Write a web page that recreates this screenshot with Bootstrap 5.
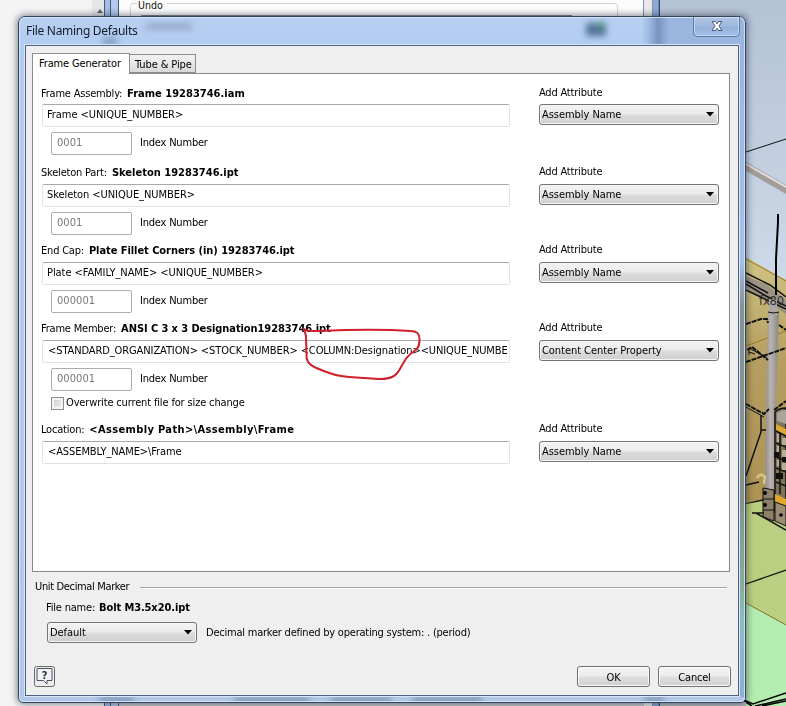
<!DOCTYPE html>
<html lang="en">
<head>
<meta charset="utf-8">
<meta name="viewport" content="width=device-width, initial-scale=1">
<title>File Naming Defaults</title>
<link href="https://cdn.jsdelivr.net/npm/bootstrap@5.3.0/dist/css/bootstrap.min.css" rel="stylesheet">
<style>
body{margin:0;background:#f4f4f4;overflow:hidden}
.desk{width:786px;height:706px;font:11px/14px "DejaVu Sans Condensed","DejaVu Sans",sans-serif;color:#000;letter-spacing:-.2px}
.desk b{letter-spacing:.02px;color:#000;margin-left:1px}
.scene{left:0;top:0}
.win{left:18px;top:16px;width:728px;height:687px;border:1px solid #34465c;border-radius:7px 7px 5px 5px;box-shadow:0 0 7px 1px rgba(20,30,50,.55);padding:0 6px 6px;background:linear-gradient(#b9cff2,#b2cdf0 28px,#b7cae9 60px,#b3c8e8)}
.glass{left:0;top:0}
.titlebar{height:28px;font:12px/27px "Noto Sans","Open Sans",sans-serif;letter-spacing:-.3px;color:#131c2c;padding-left:1px}
.closer{right:-1px;top:0;width:47px;height:20px;border:1px solid #60799f;border-top:0;border-radius:0 0 5px 5px;background:linear-gradient(#b3c6e4,#9db7de 50%,#94afda 52%,#a3bee6);box-shadow:inset 0 0 0 1px rgba(255,255,255,.4)}
.client{height:651px;background:#efefef;border:1px solid #4d6280;box-shadow:0 0 0 1px #d8e6f8;padding:7px 7px 0 6px}
.tabrow{height:20px}
.tab-on{width:98px;height:21px;background:#fff;border:1px solid #8b8e93;border-bottom:0;line-height:19px;padding-left:6px;letter-spacing:-.15px;z-index:2}
.tab-off{width:66px;height:19px;background:linear-gradient(#f2f2f2,#e8e8e8 50%,#d9d9d9);border:1px solid #8b8e93;border-left:0;line-height:20px;padding-left:5px;letter-spacing:-.1px;white-space:nowrap}
.pane{height:499px;width:698px;background:#fff;border:1px solid #85888d;padding:9px 0 0 9px}
.grp{gap:29px}
.grp-l{width:468px}
.grp-r{width:180px}
.cap{height:21px;line-height:20px}
.grp-l .cap{margin-left:-1px}
.grp-l .cap b{margin-left:2px}
.grp-r .cap{line-height:18px}
.g1 .cap{line-height:22px}
.g1 .grp-r .cap{line-height:20px}
.field{height:23px;line-height:19px;border:1px solid #dfe4ec;border-top-color:#a5a9b0;border-radius:2px;padding-left:4px;background:#fff;letter-spacing:-.06px}
.g4 .field,.g5 .field{padding-left:5px;letter-spacing:-.1px}
.idx{height:23px;margin-top:5px;margin-left:9px}
.idx div{width:81px;height:23px;border:1px solid #abadb0;border-radius:2px;color:#777;line-height:19px;padding-left:5px;letter-spacing:.05px}
.idx span{margin-left:8px;line-height:22px}
.drop{height:21px;border:1px solid #747474;border-radius:3px;background:linear-gradient(#f3f3f3,#ebebeb 48%,#dcdcdc 52%,#cfcfcf);box-shadow:inset 0 0 0 1px #f6f6f6;padding:0 4px 0 2px;letter-spacing:-.05px}
.drop span{padding-top:1px}
.ovr{height:14px;margin:5px 0 1px 9px;letter-spacing:-.15px}
.tick{width:13px;height:13px;border:1px solid #8b8d90;background:linear-gradient(135deg,#c9cccf,#f2f2f2);box-shadow:inset 0 0 0 2px #f4f4f4;margin-right:2px}
.g3,.g4{margin-top:6px}
.g5{margin-top:9px}
.desk .g3 b,.desk .g4 b{letter-spacing:-.06px}
.desk .g4 b{letter-spacing:-.08px}
.desk .g5 b{letter-spacing:.36px}
.rule{height:1px;background:#a5a5a5;width:587px;box-shadow:0 1px #fff}
.udm{height:16px;margin-top:7px;padding-left:3px}
.udm span{letter-spacing:-.35px}
.fname{margin:6px 0 0 14px}
.desk .fname b{letter-spacing:-.1px}
.drow{height:21px;margin:7px 0 0 15px}
.unit{width:150px}
.dm{margin-left:9px;letter-spacing:-.22px;line-height:19px}
.foot{margin:23px 0 0 2px;height:21px}
.pb{width:73px;height:21px;border:1px solid #707070;border-radius:3px;background:linear-gradient(#f4f4f4,#ececec 48%,#dedede 52%,#d1d1d1);box-shadow:inset 0 0 0 1px #fafafa;line-height:21px;text-align:center}
.ok{margin-right:8px}
.helpb{width:21px;height:21px}
.ink{left:0;top:0;z-index:5;pointer-events:none}
</style>
<script src="https://cdn.jsdelivr.net/npm/bootstrap@5.3.0/dist/js/bootstrap.bundle.min.js"></script>
</head>
<body>
<div class="desk position-relative overflow-hidden">
<svg class="scene position-absolute" width="786" height="706" viewBox="0 0 786 706">
<defs>
<linearGradient id="sky" x2="0" y2="1"><stop offset="0" stop-color="#b4c2d6"/><stop offset="1" stop-color="#cedbe9"/></linearGradient>
<linearGradient id="sand" x2="0" y2="1"><stop offset="0" stop-color="#d0c485"/><stop offset=".35" stop-color="#b59e60"/><stop offset="1" stop-color="#a98f50"/></linearGradient>
<linearGradient id="pipe"><stop offset="0" stop-color="#8f8a86"/><stop offset=".4" stop-color="#b9b4b1"/><stop offset="1" stop-color="#8c8682"/></linearGradient>
</defs>
<rect width="786" height="706" fill="#f4f4f4"/>
<rect x="92" width="12" height="17" fill="#e6e6e6"/><path d="M97 13l3-4 3 4z" fill="#666"/>
<rect x="104" width="15" height="706" fill="#a7bde0"/><path d="M104.500 0V706M110.500 0V706M118.500 0V706" stroke="#44597c"/>
<rect x="111" width="7" height="706" fill="#b3c8eb"/>
<rect x="119" width="525" height="706" fill="#fcfcfc"/>
<path d="M137 3.500H133q-2.500 0-2.500 3V20M167 3.500H614q3.500 0 3.500 3V20" fill="none" stroke="#d2d2d2"/>
<path d="M141 15.500H572" stroke="#888"/>
<rect x="644" width="8" height="706" fill="#e9e9e9"/><path d="M643.500 0V706M652.500 0V706" stroke="#8592a6"/>
<rect x="653" width="6" height="706" fill="#8ba9d6"/><path d="M659.500 0V706" stroke="#2f4567" stroke-width="1.500"/>
<rect x="660" width="126" height="300" fill="url(#sky)"/>
<path d="M746 257L786 280V555L746 540z" fill="url(#sand)"/>
<path d="M746 259l40 22M746 346l40-15" stroke="#9b7b24" fill="none"/>
<path d="M746 152l40-13" stroke="#111"/>
<path d="M746 162l40 23v9l-40-23z" fill="#a39d9a"/><path d="M746 164l40 23" stroke="#e3dedb" stroke-width="2"/>
<path d="M746 276l20 8 20 16v14l-40-26z" fill="#9c9284"/>
<path d="M746 273l24 12 16 12M746 281l22 12M746 284l20 12 20 10M746 290l40 19" stroke="#111" stroke-width="1.500" fill="none"/>
<path d="M768 312h11l-3 92-2 85h-9l1-85z" fill="url(#pipe)"/>
<path d="M769 299h8v16h-8z" fill="#aaa7a5"/><path d="M768 312q5 2 11 0" stroke="#111" fill="none"/>
<path d="M778 214v8l-2 37v36" stroke="#000" stroke-width="2" fill="none"/>
<text x="759" y="305" font-size="12" textLength="25" lengthAdjust="spacingAndGlyphs" fill="#35332f">fx80</text>
<path d="M746 324l15-5h6l1 4M779 325l7 5M746 362l40-14M747 350l5-3 16 13M746 404l18 10 5-5M774 410l12-9" stroke="#111" stroke-width="2" stroke-dasharray="5 1" fill="none"/>
<path d="M749 355v-7l18 10M749 352l6 2M746 407l18 10" fill="none" stroke="#111"/>
<path d="M761 415v17l-15 44M761 430h5M746 485l13-3M746 504l17-4" stroke="#111" stroke-width="1.500" fill="none"/>
<path d="M757 478q3-6 8-1l-1 7" stroke="#d9c48e" stroke-width="2.500" fill="none"/>
<path d="M775 412q4-4 11-4v117l-11-6z" fill="#7f7359" stroke="#111" stroke-width="1.500"/>
<path d="M777 413q4-3 9-3v14l-9-3z" fill="#a9a69c"/>
<path d="M776 424l10 5v7l-10-6zM775 494l11 5v10l-11-3z" fill="#dda82d"/>
<path d="M776 431l10 5M776 443l10 4M776 457l10 4M776 468l10 4M776 482l10 4M780 432v62" stroke="#111" stroke-width="1.500"/>
<g fill="#b7ac94"><path d="M777 434h2v8h-2zM782 438h4v7h-4zM777 446h2v9h-2zM782 450h4v8h-4zM777 460h2v6h-2zM782 463h4v7h-4z"/></g>
<g fill="#111"><path d="M774 452h5v6h-5zM782 457h4v5h-4zM776 473h7v6h-7z"/></g>
<path d="M746 504l17-3 23 24v80l-40-30z" fill="#b9cd7d"/>
<path d="M746 510V706h40V527l-23-9z" fill="#bbcf82"/>
<path d="M763 488l11 2v31l-11-4z" fill="#8d8069" stroke="#111"/><path d="M775 502l11 4v20l-11-5z" fill="#9b8d73" stroke="#111"/>
<path d="M763 499h11M763 510h11" stroke="#111"/><circle cx="765" cy="493" r="2"/><circle cx="765" cy="505" r="2"/><circle cx="781" cy="515" r="1.800"/>
<path d="M752 513h12M756 513l30 17" stroke="#111" stroke-width="1.500"/>
<path d="M746 603l40 22v81h-40z" fill="#b4edb0"/>
<path d="M746 603l40 22" stroke="#81702b"/><path d="M746 584l40-14" stroke="#111" stroke-width="1.300"/>
<path d="M744 700l9 4 33-11M755 706l31-7M762 706l24-5M744 701l8 5" stroke="#000" stroke-width="1.500" fill="none"/>
<rect x="119" y="702" width="525" height="4" fill="#c4c6c8"/><rect x="660" y="702" width="86" height="4" fill="#b3b9bd"/>
<text x="138" y="8.500" font-size="10.500" letter-spacing="0" fill="#111">Undo</text>
</svg>

<div class="win position-absolute">
<svg class="glass position-absolute" width="726" height="685" viewBox="0 0 726 685">
<defs><filter id="soft" x="-50%" y="-50%" width="200%" height="200%"><feGaussianBlur stdDeviation="3"/></filter>
<linearGradient id="side" x2="0" y2="1"><stop offset="0" stop-color="#99b6e0"/><stop offset=".33" stop-color="#a5c0ea"/><stop offset=".4" stop-color="#88938f"/><stop offset=".7" stop-color="#899185"/><stop offset=".74" stop-color="#7fa08f"/><stop offset=".84" stop-color="#8aae98"/><stop offset=".88" stop-color="#8fbcc1"/><stop offset="1" stop-color="#8caed2"/></linearGradient>
<linearGradient id="tr" gradientUnits="userSpaceOnUse" x1="622" x2="650" y1="0" y2="0"><stop offset="0" stop-color="#8fabd8" stop-opacity="0"/><stop offset=".6" stop-color="#7693c1"/><stop offset="1" stop-color="#9ab5de"/></linearGradient></defs>
<path d="M622 0H720q6 0 6 7V29H622z" fill="url(#tr)"/>
<rect x="720" y="28" width="6" height="652" fill="url(#side)"/>
<g filter="url(#soft)"><path d="M127 6h46v7h-46z" fill="#8294af" opacity=".6"/><path d="M84 20h14v10H84z" fill="#5c78a8" opacity=".5"/><path d="M567 6h20v13h-20z" fill="#55739a"/><path d="M579 5h6v6h-6z" fill="#4e9b62"/>
<path d="M80 680h35v5H80zM215 680h75v5h-75zM312 680h60v5h-60zM393 680h70v5h-70zM625 680h20v5h-20z" fill="#5d7498" opacity=".75"/></g>
<path d="M.5 680V8Q.5.500 8 .5H718q7.500 0 7.500 7V680q0 4.500-5 4.500H5q-4.500 0-4.500-5z" fill="none" stroke="#dceafa" stroke-opacity=".8"/>
</svg>
<div class="titlebar position-relative">File Naming Defaults
<div class="closer position-absolute"><svg class="d-block mx-auto" width="16" height="18" viewBox="0 0 16 18"><path d="M3 4.500h3.400L8 6.800l1.600-2.300H13L10 9l3 4.500H9.600L8 11.200l-1.600 2.300H3L6 9z" fill="#fff" stroke="#4c5b74"/></svg></div>
</div>
<div class="client position-relative">
<div class="tabrow d-flex align-items-end"><div class="tab-on position-relative align-self-start">Frame Generator</div><div class="tab-off">Tube &amp; Pipe</div></div>
<div class="pane">
 <div class="grp g1 d-flex"><div class="grp-l"><div class="cap">Frame Assembly: <b>Frame 19283746.iam</b></div><div class="field">Frame &lt;UNIQUE_NUMBER&gt;</div><div class="idx d-flex"><div>0001</div><span>Index Number</span></div></div>
 <div class="grp-r"><div class="cap">Add Attribute</div><div class="drop d-flex justify-content-between align-items-center"><span>Assembly Name</span><svg width="8" height="5"><path d="M0 0h8L4 4.500z"/></svg></div></div></div>
 <div class="grp d-flex mt-2"><div class="grp-l"><div class="cap">Skeleton Part: <b>Skeleton 19283746.ipt</b></div><div class="field">Skeleton &lt;UNIQUE_NUMBER&gt;</div><div class="idx d-flex"><div>0001</div><span>Index Number</span></div></div>
 <div class="grp-r"><div class="cap">Add Attribute</div><div class="drop d-flex justify-content-between align-items-center"><span>Assembly Name</span><svg width="8" height="5"><path d="M0 0h8L4 4.500z"/></svg></div></div></div>
 <div class="grp d-flex g3"><div class="grp-l"><div class="cap">End Cap: <b>Plate Fillet Corners (in) 19283746.ipt</b></div><div class="field">Plate &lt;FAMILY_NAME&gt; &lt;UNIQUE_NUMBER&gt;</div><div class="idx d-flex"><div>000001</div><span>Index Number</span></div></div>
 <div class="grp-r"><div class="cap">Add Attribute</div><div class="drop d-flex justify-content-between align-items-center"><span>Assembly Name</span><svg width="8" height="5"><path d="M0 0h8L4 4.500z"/></svg></div></div></div>
 <div class="grp d-flex g4"><div class="grp-l"><div class="cap">Frame Member: <b>ANSI C 3 x 3 Designation19283746.ipt</b></div><div class="field text-nowrap">&lt;STANDARD_ORGANIZATION&gt; &lt;STOCK_NUMBER&gt; &lt;COLUMN:Designation&gt;&lt;UNIQUE_NUMBE</div><div class="idx d-flex"><div>000001</div><span>Index Number</span></div><div class="ovr d-flex align-items-center"><div class="tick"></div>Overwrite current file for size change</div></div>
 <div class="grp-r"><div class="cap">Add Attribute</div><div class="drop d-flex justify-content-between align-items-center"><span>Content Center Property</span><svg width="8" height="5"><path d="M0 0h8L4 4.500z"/></svg></div></div></div>
 <div class="grp d-flex g5"><div class="grp-l"><div class="cap">Location: <b>&lt;Assembly Path&gt;\Assembly\Frame</b></div><div class="field">&lt;ASSEMBLY_NAME&gt;\Frame</div></div>
 <div class="grp-r"><div class="cap">Add Attribute</div><div class="drop d-flex justify-content-between align-items-center"><span>Assembly Name</span><svg width="8" height="5"><path d="M0 0h8L4 4.500z"/></svg></div></div></div>
</div>
<div class="udm d-flex align-items-center justify-content-between"><span>Unit Decimal Marker</span><div class="rule me-1"></div></div>
<div class="fname">File name: <b>Bolt M3.5x20.ipt</b></div>
<div class="drow d-flex align-items-center"><div class="drop unit d-flex justify-content-between align-items-center"><span>Default</span><svg width="8" height="5"><path d="M0 0h8L4 4.500z"/></svg></div><span class="dm">Decimal marker defined by operating system: . (period)</span></div>
<div class="foot d-flex align-items-center"><svg class="helpb me-auto" viewBox="0 0 21 21"><rect x=".5" y=".5" width="20" height="20" rx="2" fill="#ececec" stroke="#6b6b6b"/><path d="M3 2.500h15v12h-5v3.500l-3.500-3.500H3z" fill="#eef2f7" stroke="#4b5561"/><text x="10.500" y="12.500" font-size="11" font-weight="bold" text-anchor="middle" fill="#333">?</text></svg><div class="pb ok">OK</div><div class="pb">Cancel</div></div>
</div>
</div>
<svg class="ink position-absolute" width="786" height="706" viewBox="0 0 786 706"><path d="M304 329l2 7 .5 20c0 8 6 11 20 16 12 5 22 5 53 7 12 0 17-3 21-11 6-11 8-13 14-17 5-3 5-8 5-12 0-6-3-8-9-8-28-2-70-1-93 0-8 0-9 1-14-2" fill="none" stroke="#d0202a" stroke-width="2" stroke-linecap="round" stroke-linejoin="round"/></svg>
</div>
</body>
</html>
